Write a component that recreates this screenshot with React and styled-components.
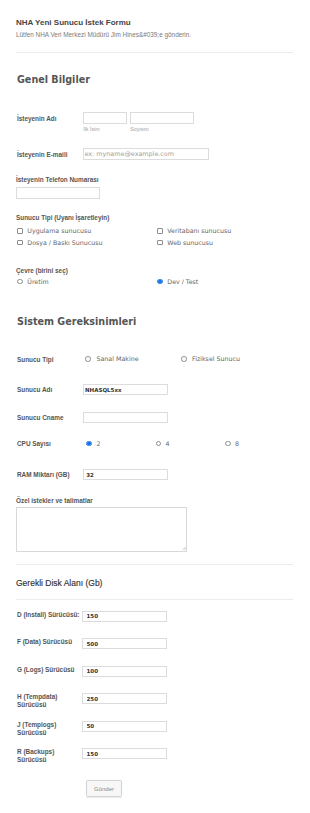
import React from "react";
import styled, { createGlobalStyle } from "styled-components";

const GlobalStyle = createGlobalStyle`
  html, body { margin: 0; padding: 0; background: #fff; }
  body { font-family: "Liberation Sans", Arial, sans-serif; }
  * { box-sizing: border-box; }
`;

const Page = styled.form`
  width: 310px;
  padding: 18px 17px 16px 16px;
  display: flex;
  flex-direction: column;
  align-items: flex-start;
`;

const Title = styled.h1`
  margin: 0;
  font-size: 8px;
  line-height: 9px;
  font-weight: bold;
  color: #454545;
`;

const Subtitle = styled.p`
  margin: 4px 0 0;
  font-size: 6.4px;
  line-height: 7px;
  color: #7a7a7a;
`;

const Divider = styled.hr`
  align-self: stretch;
  margin: ${(p) => p.$mt}px 0 0;
  border: 0;
  border-top: 1px solid #ececec;
  height: 0;
`;

const SectionHeading = styled.h2`
  margin: ${(p) => p.$mt}px 0 0;
  padding-left: 1px;
  font-family: "DejaVu Sans", Verdana, sans-serif;
  font-size: 9.6px;
  line-height: 12px;
  font-weight: bold;
  color: #555;
`;

const SubHeading = styled.h3`
  margin: ${(p) => p.$mt}px 0 0;
  font-size: 8.5px;
  line-height: 10px;
  font-weight: normal;
  color: #333;
  -webkit-text-stroke: 0.15px #333;
`;

const Row = styled.div`
  display: flex;
  align-items: flex-start;
  margin-top: ${(p) => p.$mt}px;
`;

const RowLabel = styled.label`
  flex: none;
  width: 66.5px;
  padding: ${(p) => p.$pt ?? 2.8}px 0 0 1px;
  font-size: 6.4px;
  line-height: ${(p) => p.$lh ?? 7}px;
  font-weight: bold;
  color: #555;
`;

const BlockLabel = styled.label`
  display: block;
  margin-top: ${(p) => p.$mt}px;
  font-size: 6.4px;
  line-height: 7px;
  font-weight: bold;
  color: #555;
`;

const TextInput = styled.input`
  display: block;
  width: ${(p) => p.$w}px;
  height: ${(p) => p.$h ?? 11.5}px;
  margin: ${(p) => p.$mt ?? 0}px 0 0;
  padding: 0 0 0 ${(p) => p.$pl ?? 2.8}px;
  border: 1px solid #dcdcdc;
  border-radius: 0;
  background: #fff;
  font-family: "DejaVu Sans", Verdana, sans-serif;
  font-size: ${(p) => p.$fs ?? 5.5}px;
  font-weight: bold;
  color: #333;
  outline: none;
  &::placeholder {
    color: #a0a0a0;
    font-weight: normal;
  }
`;

const NameGroup = styled.div`
  display: flex;
  gap: 3px;
`;

const NamePart = styled.div`
  display: flex;
  flex-direction: column;
`;

const SubLabel = styled.span`
  margin-top: 2px;
  padding-left: 0.7px;
  font-size: 5.3px;
  line-height: 6px;
  color: #a3a3a3;
`;

const OptionGrid = styled.div`
  display: grid;
  grid-template-columns: ${(p) => p.$cols};
  grid-auto-rows: 11.5px;
  margin-top: ${(p) => p.$mt ?? 0}px;
  padding-left: ${(p) => p.$pl ?? 0}px;
`;

const Option = styled.label`
  display: flex;
  align-items: center;
  gap: ${(p) => p.$gap ?? 4.5}px;
  font-family: "DejaVu Sans", Verdana, sans-serif;
  font-size: 6.3px;
  line-height: 11.5px;
  color: #666;
  white-space: nowrap;
`;

const Mark = styled.input`
  appearance: none;
  -webkit-appearance: none;
  flex: none;
  margin: 0;
  width: 5.5px;
  height: 5.5px;
  border: 0.8px solid #8c8c8c;
  border-radius: ${(p) => (p.type === "radio" ? "50%" : "1px")};
  background: #fff;
  &:checked {
    border-color: #1a73e8;
    background: radial-gradient(circle, #1a73e8 0 1.5px, #b9d3f7 1.9px);
  }
`;

const AreaWrap = styled.div`
  position: relative;
  margin-top: 3.8px;
`;

const TextArea = styled.textarea`
  display: block;
  width: 171px;
  height: 44.5px;
  margin: 0;
  border: 1px solid #d8d8d8;
  resize: none;
  outline: none;
  font-family: "DejaVu Sans", Verdana, sans-serif;
  font-size: 5.4px;
`;

const Grip = styled.svg`
  position: absolute;
  right: 1.5px;
  bottom: 1.5px;
  width: 4px;
  height: 4px;
`;

const DiskGrid = styled.div`
  display: grid;
  grid-template-columns: 66px auto;
  grid-auto-rows: 11px;
  row-gap: 16.5px;
  margin-top: 10.4px;
  justify-content: start;
`;

const SubmitButton = styled.button`
  margin: 20.8px 0 0 70px;
  width: 36px;
  height: 17px;
  padding: 0;
  border: 1px solid #d3d3d3;
  border-radius: 1.5px;
  background: #f7f7f7;
  box-shadow: 0 0.5px 1px rgba(0, 0, 0, 0.08);
  font-family: "Liberation Sans", Arial, sans-serif;
  font-size: 6px;
  color: #888;
`;

const disks = [
  ["D (Install) Sürücüsü:", "150"],
  ["F (Data) Sürücüsü", "500"],
  ["G (Logs) Sürücüsü", "100"],
  ["H (Tempdata) Sürücüsü", "250"],
  ["J (Templogs) Sürücüsü", "50"],
  ["R (Backups) Sürücüsü", "150"],
];

export default function App() {
  return (
    <>
      <GlobalStyle />
      <Page onSubmit={(e) => e.preventDefault()}>
        <Title>NHA Yeni Sunucu İstek Formu</Title>
        <Subtitle>Lütfen NHA Veri Merkezi Müdürü Jim Hines&amp;#039;e gönderin.</Subtitle>
        <Divider $mt={14} />

        <SectionHeading $mt={21}>Genel Bilgiler</SectionHeading>

        <Row $mt={26}>
          <RowLabel>İsteyenin Adı</RowLabel>
          <NameGroup>
            <NamePart>
              <TextInput $w={44} />
              <SubLabel>İlk İsim</SubLabel>
            </NamePart>
            <NamePart>
              <TextInput $w={64} />
              <SubLabel>Soyisim</SubLabel>
            </NamePart>
          </NameGroup>
        </Row>

        <Row $mt={16.5}>
          <RowLabel>İsteyenin E-maili</RowLabel>
          <TextInput $w={126} $h={11.7} $pl={1} $fs={6.4} placeholder="ex: myname@example.com" />
        </Row>

        <BlockLabel $mt={16.5}>İsteyenin Telefon Numarası</BlockLabel>
        <TextInput $w={83.5} $mt={4} />

        <BlockLabel $mt={15.5}>Sunucu Tipi (Uyanı İşaretleyin)</BlockLabel>
        <OptionGrid $cols="140px 120px" $mt={4} $pl={1.3}>
          <Option><Mark type="checkbox" />Uygulama sunucusu</Option>
          <Option><Mark type="checkbox" />Veritabanı sunucusu</Option>
          <Option><Mark type="checkbox" />Dosya / Baskı Sunucusu</Option>
          <Option><Mark type="checkbox" />Web sunucusu</Option>
        </OptionGrid>

        <BlockLabel $mt={19}>Çevre (birini seç)</BlockLabel>
        <OptionGrid $cols="140px 120px" $mt={1.5} $pl={1.3}>
          <Option><Mark type="radio" name="env" />Üretim</Option>
          <Option><Mark type="radio" name="env" defaultChecked />Dev / Test</Option>
        </OptionGrid>

        <SectionHeading $mt={29}>Sistem Gereksinimleri</SectionHeading>

        <Row $mt={25}>
          <RowLabel $pt={2.5}>Sunucu Tipi</RowLabel>
          <OptionGrid $cols="96px 96px" $pl={2.5}>
            <Option $gap={6}><Mark type="radio" name="kind" />Sanal Makine</Option>
            <Option $gap={5.5}><Mark type="radio" name="kind" />Fiziksel Sunucu</Option>
          </OptionGrid>
        </Row>

        <Row $mt={19.5}>
          <RowLabel $pt={1.8}>Sunucu Adı</RowLabel>
          <TextInput $w={85} $h={11} $pl={1.5} defaultValue="NHASQL5xx" />
        </Row>

        <Row $mt={16.7}>
          <RowLabel $pt={1.8}>Sunucu Cname</RowLabel>
          <TextInput $w={85} $h={11} />
        </Row>

        <Row $mt={14.8}>
          <RowLabel $pt={2.8}>CPU Sayısı</RowLabel>
          <OptionGrid $cols="69.5px 69.5px 69.5px" $pl={3.5}>
            <Option $gap={5}><Mark type="radio" name="cpu" defaultChecked />2</Option>
            <Option $gap={4.5}><Mark type="radio" name="cpu" />4</Option>
            <Option $gap={4.5}><Mark type="radio" name="cpu" />8</Option>
          </OptionGrid>
        </Row>

        <Row $mt={20.3}>
          <RowLabel $pt={1.8}>RAM Miktarı (GB)</RowLabel>
          <TextInput $w={85} $h={11} defaultValue="32" />
        </Row>

        <BlockLabel $mt={16.2}>Özel istekler ve talimatlar</BlockLabel>
        <AreaWrap>
          <TextArea />
          <Grip viewBox="0 0 4 4">
            <path d="M4 0.6 L0.6 4 M4 2.3 L2.3 4" stroke="#999" strokeWidth="0.5" />
          </Grip>
        </AreaWrap>

        <Divider $mt={12.2} />
        <SubHeading $mt={13}>Gerekli Disk Alanı (Gb)</SubHeading>
        <Divider $mt={11.3} />

        <DiskGrid>
          {disks.map(([label, value]) => (
            <React.Fragment key={label}>
              <RowLabel $pt={0} $lh={8}>{label}</RowLabel>
              <TextInput $w={85.3} $h={11} $pl={3.5} defaultValue={value} />
            </React.Fragment>
          ))}
        </DiskGrid>

        <SubmitButton type="submit">Gönder</SubmitButton>
      </Page>
    </>
  );
}
